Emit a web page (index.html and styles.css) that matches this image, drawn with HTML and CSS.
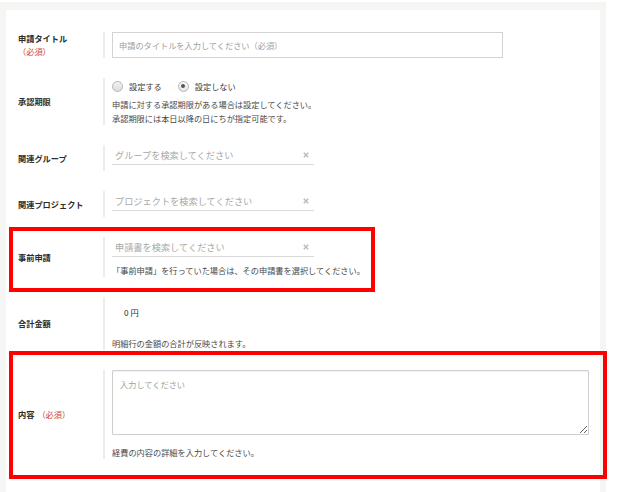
FILE: index.html
```html
<!DOCTYPE html>
<html lang="ja">
<head>
<meta charset="utf-8">
<title>申請フォーム</title>
<link rel="stylesheet" href="styles.css">
</head>
<body>
<div class="page">
  <div class="card">
    <div class="row">
      <div class="label"><div>申請タイトル</div><div class="req">（必須）</div></div>
      <div class="field">
        <input class="text" type="text" placeholder="申請のタイトルを入力してください（必須）">
      </div>
    </div>

    <div class="row">
      <div class="label">承認期限</div>
      <div class="field">
        <div class="radios">
          <span class="radio"></span><span class="radio-text">設定する</span>
          <span class="radio checked"></span><span class="radio-text">設定しない</span>
        </div>
        <div class="help two">申請に対する承認期限がある場合は設定してください。<br>承認期限には本日以降の日にちが指定可能です。</div>
      </div>
    </div>

    <div class="row">
      <div class="label">関連グループ</div>
      <div class="field pad-b">
        <div class="search"><span class="ph">グループを検索してください</span><svg class="x" viewBox="0 0 6 6"><path d="M0.8 0.8L5.2 5.2M5.2 0.8L0.8 5.2"/></svg></div>
      </div>
    </div>

    <div class="row">
      <div class="label">関連プロジェクト</div>
      <div class="field pad-b">
        <div class="search"><span class="ph">プロジェクトを検索してください</span><svg class="x" viewBox="0 0 6 6"><path d="M0.8 0.8L5.2 5.2M5.2 0.8L0.8 5.2"/></svg></div>
      </div>
    </div>

    <div class="row">
      <div class="label">事前申請</div>
      <div class="field">
        <div class="search"><span class="ph">申請書を検索してください</span><svg class="x" viewBox="0 0 6 6"><path d="M0.8 0.8L5.2 5.2M5.2 0.8L0.8 5.2"/></svg></div>
        <div class="help after-search">「事前申請」を行っていた場合は、その申請書を選択してください。</div>
      </div>
    </div>

    <div class="row">
      <div class="label">合計金額</div>
      <div class="field">
        <div class="amount">0&nbsp;円</div>
        <div class="help after-amount">明細行の金額の合計が反映されます。</div>
      </div>
    </div>

    <div class="row">
      <div class="label"><span>内容</span><span class="req inline">（必須）</span></div>
      <div class="field">
        <textarea class="area" placeholder="入力してください"></textarea>
        <div class="help after-area">経費の内容の詳細を入力してください。</div>
      </div>
    </div>
  </div>
</div>
<div class="mark mark-1"></div>
<div class="mark mark-2"></div>
</body>
</html>
```

FILE: styles.css
```css
* { box-sizing: border-box; }

html, body {
  margin: 0;
  padding: 0;
  background: #ffffff;
}

body {
  position: relative;
  width: 617px;
  height: 492px;
  overflow: hidden;
  font-family: "Noto Sans CJK JP", "Liberation Sans", sans-serif;
  font-size: 8.2px;
  color: #333333;
}

.page {
  margin-top: 2px;
  width: 606px;
  height: 490px;
  background: #f5f5f3;
  padding: 8px 6px 0 6px;
}

.card {
  background: #ffffff;
  height: 100%;
  padding-top: 22px;
}

.row {
  display: flex;
  align-items: center;
  margin-bottom: 20px;
}

.label {
  width: 97px;
  flex: none;
  padding-left: 12px;
  font-weight: bold;
  line-height: 13px;
  color: #2b2b2b;
}

.req {
  color: #d43f35;
  font-weight: normal;
}

.req.inline {
  margin-left: 3px;
}

.field {
  border-left: 2px solid #ececec;
  padding-left: 7px;
}

.pad-b {
  padding-bottom: 6px;
}

.text {
  display: block;
  width: 391px;
  height: 26px;
  margin: 0;
  border: 1px solid #d3d3d3;
  border-radius: 0;
  padding: 0 6px;
  font-family: inherit;
  font-size: 8.2px;
  color: #333;
  outline: none;
}

.text::placeholder,
.area::placeholder {
  color: #9e9e9e;
}

.radios {
  display: flex;
  align-items: center;
  height: 16px;
  line-height: 16px;
  color: #3a3a3a;
}

.radio {
  width: 11px;
  height: 11px;
  border-radius: 50%;
  border: 1px solid #b5b5b5;
  background: linear-gradient(#f2f2f2, #dcdcdc);
  flex: none;
  position: relative;
}

.radio.checked {
  background: linear-gradient(#fafafa, #e6e6e6);
  margin-left: 16px;
}

.radio.checked::after {
  content: "";
  position: absolute;
  left: 2.5px;
  top: 2.5px;
  width: 4px;
  height: 4px;
  border-radius: 50%;
  background: #555;
}

.radio-text {
  margin-left: 6px;
}

.help {
  color: #484848;
  line-height: 14px;
}

.help.two {
  margin-top: 3px;
}

.search {
  width: 202px;
  height: 20px;
  border-bottom: 1px solid #dadada;
  display: flex;
  align-items: center;
  justify-content: space-between;
  padding: 0 5px 0 3px;
}

.ph {
  font-size: 9.2px;
  color: #a8a8a8;
}

.x {
  width: 6px;
  height: 6px;
  stroke: #bdbdbd;
  stroke-width: 1.6;
  fill: none;
}

.after-search {
  margin-top: 6px;
}

.amount {
  padding: 8px 0 0 12px;
  line-height: 14px;
  color: #2b2b2b;
}

.after-amount {
  margin-top: 17px;
}

.area {
  display: block;
  width: 477px;
  height: 65px;
  margin: 0;
  border: 1px solid #cfcfcf;
  box-shadow: inset 0 1px 2px rgba(0, 0, 0, 0.06);
  border-radius: 1px;
  padding: 7px 7px;
  font-family: inherit;
  font-size: 8.2px;
  line-height: 13px;
  outline: none;
  resize: both;
}

.after-area {
  margin-top: 10px;
}

.mark {
  position: absolute;
  border: 4px solid #ff0000;
}

.mark-1 {
  left: 9px;
  top: 227px;
  width: 366px;
  height: 65px;
}

.mark-2 {
  left: 9px;
  top: 351px;
  width: 598px;
  height: 128px;
}
```
